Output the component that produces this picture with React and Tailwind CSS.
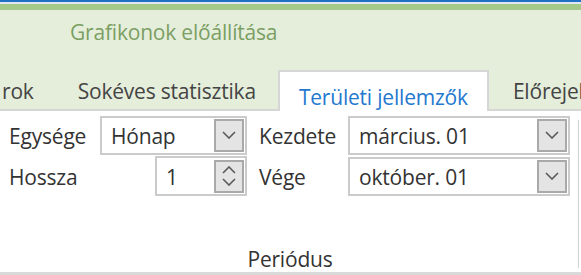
import React from "react";

function Chevron({ up = false, className = "" }) {
  return (
    <svg width="14" height="8" viewBox="0 0 14 8" className={className}>
      <path
        d={up ? "M1 7 L7 1 L13 7" : "M1 1 L7 7 L13 1"}
        fill="none"
        stroke="#5a5a5a"
        strokeWidth="1.6"
      />
    </svg>
  );
}

function Select({ value, className = "" }) {
  return (
    <div className={`shrink-0 flex items-center h-[39px] border-2 border-[#cbcbcb] bg-white ${className}`}>
      <span className="flex-1 pl-[9px] pt-[4px] text-[#333] whitespace-nowrap">{value}</span>
      <div className="w-[30px] h-[33px] mr-[1px] flex items-center justify-center bg-[#e4e4e4] border-2 border-[#a9a9a9]">
        <Chevron />
      </div>
    </div>
  );
}

function Spinner({ value, className = "" }) {
  return (
    <div className={`shrink-0 flex items-center h-[40px] border-2 border-[#cbcbcb] bg-white ${className}`}>
      <span className="flex-1 pl-[9px] pt-[4px] text-[#333]">{value}</span>
      <div className="w-[30px] h-[33px] mr-[1px] flex flex-col items-center justify-center gap-[4px] bg-[#e4e4e4] border-2 border-[#a9a9a9]">
        <Chevron up />
        <Chevron />
      </div>
    </div>
  );
}

export default function App() {
  const tabs = ["Sokéves statisztika"];

  return (
    <div
      className="w-[581px] h-[275px] overflow-hidden bg-white flex flex-col"
      style={{ fontFamily: "'Open Sans', 'Noto Sans', sans-serif" }}
    >
      {/* ================= RIBBON HEADER ================= */}

      <div className="h-[2px] bg-[#1f6fc6]" />
      <div className="h-[2px] bg-[#dfe8f0]" />
      <div className="h-[6px] bg-[#a5c98b]" />

      <div className="bg-[#e5eedb] flex flex-col">
        <div className="h-[44px] pl-[70px] pt-[7px] text-[21px] text-[#7b9f63] tracking-[-0.2px] whitespace-nowrap">
          Grafikonok előállítása
        </div>

        <div className="flex items-end h-[57px] border-b-2 border-[#d6d6d6] text-[21px] text-[#444] tracking-[-0.2px] leading-[28px] whitespace-nowrap">
          <div className="shrink-0 pr-[20px] pb-[2px] border-2 border-transparent">rok</div>
          {tabs.map((t) => (
            <div key={t} className="shrink-0 px-[20px] pb-[2px] border-2 border-transparent">
              {t}
            </div>
          ))}
          <div className="shrink-0 relative -mb-[2px] h-[41px] px-[19px] pt-[11px] bg-white border-2 border-b-0 border-[#d6d6d6] text-[#2478cf]">
            Területi jellemzők
          </div>
          <div className="shrink-0 pl-[22px] pb-[2px] border-2 border-transparent">
            Előrejel
          </div>
        </div>
      </div>

      {/* ================= PANEL ================= */}

      <div className="flex-1 flex border-b-[3px] border-[#d9d9d9] text-[21px] text-[#333] tracking-[-0.2px] whitespace-nowrap">
        <div className="w-[578px] flex flex-col pt-[4px]">
          <div className="flex items-center h-[40px]">
            <span className="shrink-0 w-[100px] pl-[9px] pt-[4px]">Egysége</span>
            <Select value="Hónap" className="w-[147px]" />
            <span className="shrink-0 w-[101px] pl-[12px] pt-[4px]">Kezdete</span>
            <Select value="március. 01" className="w-[222px]" />
          </div>

          <div className="flex items-center h-[42px]">
            <span className="shrink-0 w-[155px] pl-[9px] pt-[4px]">Hossza</span>
            <Spinner value="1" className="w-[92px]" />
            <span className="shrink-0 w-[101px] pl-[12px] pt-[4px]">Vége</span>
            <Select value="október. 01" className="w-[222px]" />
          </div>

          <div className="flex-1 flex items-end justify-center pl-[2px] leading-[26px]">
            Periódus
          </div>
        </div>

        <div className="w-[1px] mt-[9px] mb-[4px] bg-[#d2d2d2]" />
      </div>
    </div>
  );
}
